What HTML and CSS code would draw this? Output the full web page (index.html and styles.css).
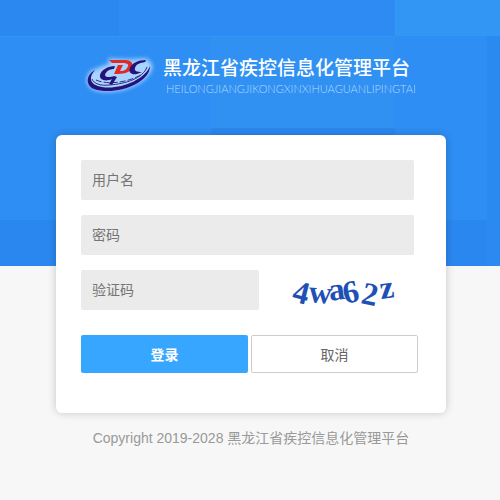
FILE: index.html
```html
<!DOCTYPE html>
<html lang="zh-CN">
<head>
    <meta charset="UTF-8">
    <meta name="viewport" content="width=device-width, initial-scale=1.0">
    <title>黑龙江省疾控信息化管理平台</title>
    <link rel="stylesheet" href="styles.css">
</head>
<body>
    <div class="page">
        <header class="header">
            <svg class="logo" viewBox="0 0 72 46" aria-hidden="true">
                <g class="logo-glow">
                    <path d="M9 20 C2 28 5 36 17 38 C40 40 64 30 68 15 C67 11 64 8 62 8 L46 9 L27 8 L28 13 C20 15 14 18 12 19 Z"/>
                </g>
                <path class="navy" d="M12 18 C3 23 2 33 11 37 C31 44 67 32 67 14 C62 28 36 38 19 35 C7 33 5 26 12 18 Z"/>
                <path class="arc" d="M9 27 C11 32 18 34 26 33 C43 32 60 26 64 15"/>
                <path class="dash" d="M13 28 C24 33 43 31 58 23"/>
                <path class="navy" d="M32 14 C25 14 18 18 17 23 C16 28 23 30 29 27 L26 32 L29 33 L34 25 L31 24 C26 26 22 25 22 23 C23 19 27 17 31 17 Z"/>
                <path class="red" d="M26 8 H43 C50 9 51 13 48 17 C46 21 41 22 31 22 L35 13 H40 L37 19 C42 19 44 17 45 14 C46 12 43 11 40 11 H29 Z"/>
                <path class="navy" d="M63 8 C55 8 49 11 47 16 C45 21 49 23 54 22 L59 20 C54 20 51 19 52 16 C53 12 57 11 62 10 Z"/>
            </svg>
            <div class="brand">
                <h1 class="brand-name">黑龙江省疾控信息化管理平台</h1>
                <p class="brand-pinyin">HEILONGJIANGJIKONGXINXIHUAGUANLIPINGTAI</p>
            </div>
        </header>

        <form class="login-box" action="#" method="post">
            <input class="field" type="text" name="username" placeholder="用户名" aria-label="用户名">
            <input class="field" type="password" name="password" placeholder="密码" aria-label="密码">
            <div class="code-row">
                <input class="field code-field" type="text" name="code" placeholder="验证码" aria-label="验证码">
                <svg class="captcha" viewBox="0 0 120 40" role="img" aria-label="验证码图片">
                    <text transform="translate(8 31) rotate(14)">4</text>
                    <text transform="translate(25 32) rotate(5)">w</text>
                    <text transform="translate(47 31) rotate(-8)">a</text>
                    <text transform="translate(62 34) rotate(-12)">6</text>
                    <text transform="translate(77 33) rotate(12)">2</text>
                    <text transform="translate(98 29) rotate(-8)">z</text>
                </svg>
            </div>
            <div class="buttons">
                <button class="btn btn-login" type="submit">登录</button>
                <button class="btn btn-cancel" type="reset">取消</button>
            </div>
        </form>

        <p class="copyright">Copyright 2019-2028 黑龙江省疾控信息化管理平台</p>
    </div>
</body>
</html>
```

FILE: styles.css
```css
* {
    box-sizing: border-box;
}

body {
    margin: 0;
    min-height: 100vh;
    font-family: "Liberation Sans", "Noto Sans CJK SC", sans-serif;
    font-size: 14px;
    color: #666;
    background-color: #f7f7f7;
    /* blue squares behind the top of the page */
    background-image:
        linear-gradient(#3799f6, #3799f6),
        linear-gradient(#3296f5, #3296f5),
        linear-gradient(#2e8bf3, #2e8bf3),
        linear-gradient(#2b88f0, #2b88f0),
        linear-gradient(#3594f4, #3594f4),
        linear-gradient(#3091f3, #3091f3),
        linear-gradient(#2c87f0, #2c87f0),
        linear-gradient(#2b87f0, #2b87f0),
        linear-gradient(#2b8af1, #2b8af1),
        linear-gradient(#2e8ef3, #2e8ef3);
    background-position: 395px 0, 395px 0, 119px 0, 0 0, 0 36px, 211px 36px, 211px 128px, 0 220px, 487px 36px, 0 0;
    background-size: 1px 36px, 105px 36px, 276px 36px, 119px 36px, 395px 1px, 184px 92px, 184px 92px, 487px 46px, 100% 230px, 100% 266px;
    background-repeat: no-repeat;
}

.page {
    max-width: 500px;
    margin: 0 auto;
    padding: 52px 54px 0 56px;
}

.header {
    display: flex;
    align-items: flex-start;
    gap: 8px;
    height: 83px;
    padding-left: 27px;
}

.logo {
    flex: none;
    width: 72px;
    height: 46px;
    overflow: visible;
}

.logo-glow {
    fill: #a9d4ff;
    stroke: #a9d4ff;
    stroke-width: 3;
    filter: blur(2px);
}

.navy {
    fill: #25127a;
}

.red {
    fill: #e12a24;
}

.arc,
.dash {
    fill: none;
    stroke: #2e2a86;
    stroke-width: 1;
}

.dash {
    stroke-dasharray: 6 2;
}

.brand-name {
    margin: 0;
    font-family: "Noto Sans CJK SC", sans-serif;
    font-size: 19px;
    line-height: 30px;
    font-weight: 500;
    white-space: nowrap;
    color: #fff;
}

.brand-pinyin {
    margin: 0;
    padding-left: 3px;
    font-family: Lato, "Liberation Sans", sans-serif;
    font-size: 11px;
    line-height: 14px;
    font-weight: 300;
    color: #b4d9fc;
}

.login-box {
    display: flex;
    flex-direction: column;
    gap: 15px;
    padding: 25px 25px 40px;
    background-color: #fff;
    border-radius: 6px;
    box-shadow: 0 0 8px rgba(0, 0, 0, 0.2);
}

.field {
    width: 98%;
    height: 40px;
    padding: 0 11px;
    border: none;
    border-radius: 2px;
    background-color: #ebebeb;
    font: inherit;
}

.field::placeholder {
    color: #757575;
}

.code-row {
    display: flex;
    align-items: center;
    gap: 24px;
}

.code-field {
    width: 178px;
}

.captcha {
    width: 120px;
    height: 40px;
    overflow: visible;
}

.captcha text {
    font-family: "Liberation Serif", serif;
    font-size: 32px;
    font-weight: bold;
    fill: #1f50b5;
}

.buttons {
    display: grid;
    grid-template-columns: 1fr 1fr;
    gap: 3px;
    padding: 10px 3px 0 0;
}

.btn {
    height: 38px;
    padding: 0;
    border-radius: 2px;
    font: inherit;
    cursor: pointer;
}

.btn-login {
    border: none;
    background-color: #36a6ff;
    color: #fff;
    font-weight: bold;
}

.btn-cancel {
    border: 1px solid #ccc;
    background-color: #fff;
    color: #666;
}

.copyright {
    margin: 15px 0 0;
    text-align: center;
    line-height: 20px;
    white-space: nowrap;
    color: #999;
}
```
